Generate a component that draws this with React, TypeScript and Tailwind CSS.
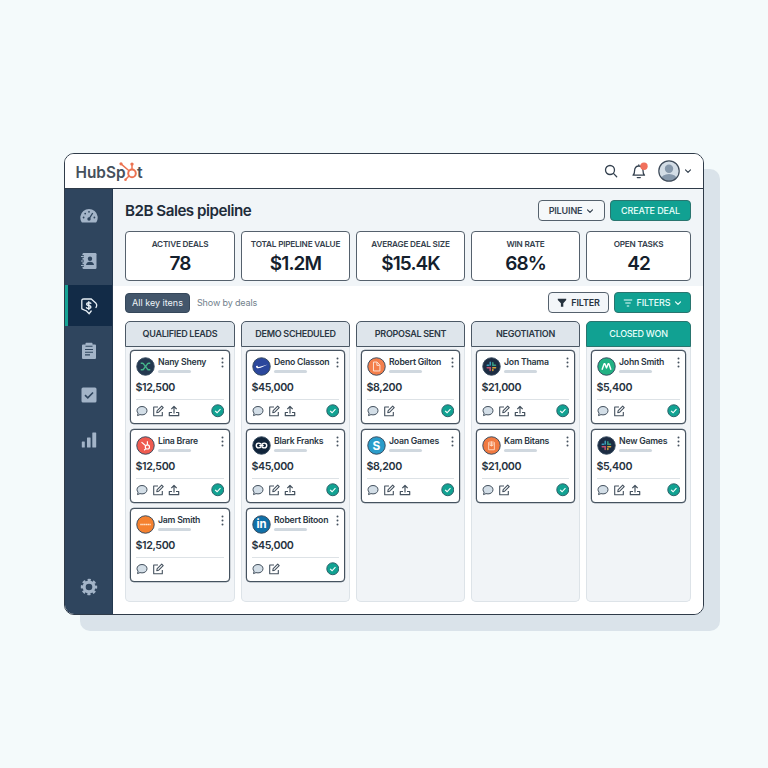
import {type ReactNode} from 'react';

type Deal = {name: string; amount: string; logo: string; upload?: boolean; done?: boolean};

const stats = [
  {label: 'ACTIVE DEALS', value: '78', width: 'w-[110px]'},
  {label: 'TOTAL PIPELINE VALUE', value: '$1.2M', width: 'w-[109px]'},
  {label: 'AVERAGE DEAL SIZE', value: '$15.4K', width: 'w-[109px]'},
  {label: 'WIN RATE', value: '68%', width: 'w-[109px]'},
  {label: 'OPEN TASKS', value: '42', width: 'w-[105px]'},
];

const columns: {title: string; width: string; won?: boolean; deals: Deal[]}[] = [
  {
    title: 'QUALIFIED LEADS',
    width: 'w-[110px]',
    deals: [
      {name: 'Nany Sheny', amount: '$12,500', logo: 'xing', upload: true, done: true},
      {name: 'Lina Brare', amount: '$12,500', logo: 'hub', upload: true, done: true},
      {name: 'Jam Smith', amount: '$12,500', logo: 'orange'},
    ],
  },
  {
    title: 'DEMO SCHEDULED',
    width: 'w-[109px]',
    deals: [
      {name: 'Deno Classon', amount: '$45,000', logo: 'swoosh', upload: true, done: true},
      {name: 'Blark Franks', amount: '$45,000', logo: 'loop', upload: true, done: true},
      {name: 'Robert Bitoon', amount: '$45,000', logo: 'in', done: true},
    ],
  },
  {
    title: 'PROPOSAL SENT',
    width: 'w-[109px]',
    deals: [
      {name: 'Robert Gilton', amount: '$8,200', logo: 'doc', done: true},
      {name: 'Joan Games', amount: '$8,200', logo: 's', upload: true, done: true},
    ],
  },
  {
    title: 'NEGOTIATION',
    width: 'w-[109px]',
    deals: [
      {name: 'Jon Thama', amount: '$21,000', logo: 'slack', upload: true, done: true},
      {name: 'Kam Bitans', amount: '$21,000', logo: 'book', done: true},
    ],
  },
  {
    title: 'CLOSED WON',
    width: 'w-[105px]',
    won: true,
    deals: [
      {name: 'John Smith', amount: '$5,400', logo: 'm', done: true},
      {name: 'New Games', amount: '$5,400', logo: 'slack', upload: true, done: true},
    ],
  },
];

const logoFill: Record<string, string> = {
  xing: '#24384f',
  hub: '#ef5b50',
  orange: '#f5812f',
  swoosh: '#2b479c',
  loop: '#10243a',
  in: '#1070a8',
  doc: '#f47f4b',
  s: '#2b9cc9',
  slack: '#1c2c42',
  book: '#f17a41',
  m: '#22b183',
};

const logoMark: Record<string, ReactNode> = {
  xing: (
    <g fill="none" stroke="#45b58a" strokeWidth="1.5">
      <path d="M5 6.500h1.800q1 0 1.700 1.500l3 4q.7 1.500 1.700 1.500H15" />
      <path d="M15 6.500h-1.800q-1 0-1.700 1.500l-3 4q-.7 1.500-1.700 1.500H5" />
    </g>
  ),
  hub: (
    <g fill="none" stroke="#fff" strokeWidth="1.2">
      <circle cx="12" cy="11.5" r="2.2" />
      <path d="M12 9.300V5.500M10.200 10.200 5.800 6.500M10.400 13.200 8.600 15" />
    </g>
  ),
  orange: <path d="M4.500 10h11" stroke="#ffe3cc" strokeWidth="1.5" strokeDasharray="1.6 .4" />,
  swoosh: <path d="M4.200 9.400c-.1 3 2.500 2.700 4.900 1.900L16.500 8l-7.300 2.100c-2 .6-3.400.5-3.200-1z" fill="#fff" />,
  loop: (
    <g fill="none" stroke="#fff" strokeWidth="1.5" strokeLinecap="round">
      <path d="M9.200 8.300Q8.300 7.500 7 7.500a2.500 2.500 0 0 0 0 5q1.500 0 2.500-1.200" />
      <path d="M10.500 8.700q1-1.200 2.500-1.200a2.500 2.500 0 0 1 0 5q-1.300 0-2.200-.8M8.300 10h3.400" />
    </g>
  ),
  in: (
    <text x="10" y="14.2" textAnchor="middle" fontSize="12" fontWeight="700" fill="#fff">
      in
    </text>
  ),
  doc: <path d="M6.800 5.300h3.800L13.600 8.500v6.200H6.800zM10.400 5.600v3.200h3" fill="none" stroke="#ffe6d8" strokeWidth="1" />,
  s: (
    <text x="10" y="14.4" textAnchor="middle" fontSize="12.5" fontWeight="700" fill="#fff">
      S
    </text>
  ),
  slack: (
    <g fill="none" strokeWidth="1.6" strokeLinecap="round">
      <path d="M8.700 5.500v3M5.500 8.700h1.600" stroke="#3a9dbd" />
      <path d="M11.400 6v2.600h2.800" stroke="#3b9f83" />
      <path d="M11.400 11.300h2.900M11.400 13.200v1" stroke="#d9a43a" />
      <path d="M5.500 11.300h3.100v2.900" stroke="#c2526f" />
    </g>
  ),
  book: (
    <g fill="none" stroke="#ffdfca" strokeWidth=".9">
      <path d="M7 6.500v8h6v-8M10 5.500v5.500M8.500 5.500v4.500h3V5.500" />
    </g>
  ),
  m: <path d="M5.300 13.500 7.500 7h.8l1.700 4.500L11.700 7h.8l2.200 6.500" fill="none" stroke="#fff" strokeWidth="1.5" strokeLinejoin="round" />,
};

const Chevron = ({className}: {className?: string}) => (
  <svg viewBox="0 0 8 8" className={`size-2 ${className ?? ''}`} fill="none" stroke="currentColor" strokeWidth="1.2" strokeLinecap="round" strokeLinejoin="round">
    <path d="m1.500 2.800 2.500 2.500 2.500-2.500" />
  </svg>
);

const Logo = () => (
  <svg viewBox="0 0 70 24" className="h-6 w-[70px]">
    <g fill="#45505c" fontSize="16" fontWeight="600" fontFamily="Inter, sans-serif">
      <text x="0.5" y="18.8" textLength="50" lengthAdjust="spacingAndGlyphs">
        HubSp
      </text>
      <text x="62" y="18.8">
        t
      </text>
    </g>
    <g fill="none" stroke="#ec7250" strokeWidth="2">
      <circle cx="57" cy="14.4" r="3.8" />
      <path d="M57 10.500V5.500M54 11.700 46.300 5.100M54 17l-3.500 3.500" strokeWidth="1.5" />
    </g>
    <g fill="#ec7250">
      <circle cx="57" cy="5.1" r="1.7" />
      <circle cx="46" cy="4.8" r="1.6" />
      <circle cx="50.5" cy="20.7" r="1.3" />
    </g>
  </svg>
);

const Header = () => (
  <header className="flex h-[35px] shrink-0 items-center border-b border-[#2f3b49] bg-white pr-[11px] pl-[10px]">
    <Logo />
    <div className="ml-auto flex items-center text-[#34414f]">
      <svg viewBox="0 0 14 14" className="size-3.5" fill="none" stroke="currentColor" strokeWidth="1.3" strokeLinecap="round">
        <circle cx="6" cy="6" r="4.5" />
        <path d="m9.400 9.400 3.300 3.300" />
      </svg>
      <svg viewBox="0 0 18 18" className="ml-3 size-[18px]" fill="none" stroke="currentColor" strokeWidth="1.3" strokeLinecap="round" strokeLinejoin="round">
        <path d="M3 13.200h11.500c-1.500-1.200-1.500-2.500-1.500-4.700 0-2.800-1.700-4.500-4.200-4.500S4.600 5.700 4.600 8.500c0 2.200-.1 3.500-1.600 4.700zM7.300 15.600h3M8.800 3.800V3" />
        <circle cx="14" cy="4.3" r="3.7" fill="#f1705c" stroke="none" />
      </svg>
      <svg viewBox="0 0 22 22" className="ml-[10px] size-[22px]">
        <clipPath id="user">
          <circle cx="11" cy="11" r="10" />
        </clipPath>
        <circle cx="11" cy="11" r="10" fill="#d3dde6" />
        <g clipPath="url(#user)" fill="#8698ab">
          <circle cx="11" cy="8.7" r="4.2" />
          <ellipse cx="11" cy="19.5" rx="8" ry="5.5" />
        </g>
        <circle cx="11" cy="11" r="10.2" fill="none" stroke="#3d4a59" strokeWidth="1.2" />
      </svg>
      <Chevron className="ml-1" />
    </div>
  </header>
);

const Sidebar = () => (
  <nav className="flex w-12 shrink-0 flex-col items-center border-r border-[#24384f] bg-[#2f455e] pb-[18px] text-[#a3b4c8]">
    <div className="flex h-[52px] w-full items-center justify-center pt-px">
      <svg viewBox="0 0 18 18" className="size-[18px]" fill="currentColor">
        <path d="M1.500 15A8.700 8.700 0 1 1 16.500 15q-.4.600-1.200.600H2.700q-.8 0-1.200-.6z" />
        <g fill="#2f455e">
          <circle cx="3.6" cy="10.5" r=".9" />
          <circle cx="5.2" cy="6.6" r=".9" />
          <circle cx="9" cy="4.8" r=".9" />
          <circle cx="14.4" cy="10.5" r=".9" />
          <circle cx="9" cy="12" r="1.7" />
        </g>
        <path d="m9 12 3.700-6" stroke="#2f455e" strokeWidth="1.3" />
      </svg>
    </div>
    <div className="flex h-[44px] w-full items-start justify-center pt-[11px]">
      <svg viewBox="0 0 18 18" className="size-[18px]" fill="currentColor">
        <rect x="2.5" y="1" width="14" height="16" rx="1.2" />
        <path d="M1 4.500h3M1 9h3M1 13.500h3" stroke="#2f455e" strokeWidth="2.4" />
        <path d="M1 4.500h2.800M1 9h2.800M1 13.500h2.800" stroke="currentColor" strokeWidth="1.2" />
        <circle cx="10" cy="6.8" r="2.2" fill="#2f455e" />
        <path d="M6 13c0-4.500 8-4.500 8 0z" fill="#2f455e" />
      </svg>
    </div>
    <div className="flex h-[41px] w-full items-center justify-center border-l-[3px] border-[#16a394] bg-[#122b47] pr-[3px] text-[#e8f0f6]">
      <svg viewBox="0 0 18 18" className="size-[18px]" fill="none" stroke="currentColor" strokeWidth="1.3" strokeLinecap="round" strokeLinejoin="round">
        <path d="M6.500 14 1.800 11.800V3.500q0-1.500 1.500-1.500L11 1.800l5 4.500c1 1.300.9 2.600 0 4.200M6.500 14l2.700 2.700 2-2.700" />
        <path d="M10.800 6.200c-1.200-1-4.200-.7-4.200 1 0 1.800 4.300.8 4.300 2.700 0 1.700-3 1.900-4.400.8M8.800 4.800v7.800" strokeWidth="1.4" />
      </svg>
    </div>
    <div className="flex h-[49px] w-full items-center justify-center">
      <svg viewBox="0 0 16 18" className="h-[18px] w-4" fill="currentColor">
        <path d="M2 2.500h2.500V1.500q0-.7.700-.7h5.600q.7 0 .7.700v1H14q1 0 1 1V16q0 1-1 1H2q-1 0-1-1V3.500q0-1 1-1z" />
        <path d="M4.500 4.300h7M4 7.500h8M4 10.200h8M4 12.900h5" stroke="#2f455e" strokeWidth="1.1" />
      </svg>
    </div>
    <div className="flex h-[40px] w-full items-center justify-center">
      <svg viewBox="0 0 16 16" className="size-4">
        <rect x=".5" y=".5" width="15" height="15" rx="1.5" fill="currentColor" />
        <path d="m4 8.200 2.800 2.700L12 5.500" fill="none" stroke="#2f455e" strokeWidth="1.6" />
      </svg>
    </div>
    <div className="flex h-[49px] w-full items-center justify-center">
      <svg viewBox="0 0 16 16" className="size-4" fill="currentColor">
        <rect x=".8" y="9.5" width="3" height="6" rx=".5" />
        <rect x="6" y="5.5" width="3.6" height="10" rx=".5" />
        <rect x="11.3" y=".5" width="3.9" height="15" rx=".5" />
      </svg>
    </div>
    <svg viewBox="0 0 18 18" className="mt-auto size-[18px]" fill="none" stroke="currentColor">
      <circle cx="9" cy="9" r="4.9" strokeWidth="3.2" />
      <circle cx="9" cy="9" r="7" strokeWidth="2.4" strokeDasharray="3.1 2.398" strokeDashoffset="1.55" />
    </svg>
  </nav>
);

const DealCard = ({deal}: {deal: Deal}) => (
  <article className="flex h-[74px] flex-col rounded-[4px] border border-[#45525f] bg-white px-[5px] shadow-[0_0_0_.2px_#45525f]">
    <div className="flex h-[27px] pt-[5.5px]">
      <svg viewBox="0 0 20 20" className="size-[19px] shrink-0 font-[Inter,sans-serif]">
        <circle cx="10" cy="10" r="9.2" fill={logoFill[deal.logo]} stroke="#35495d" strokeWidth="1" />
        {logoMark[deal.logo]}
      </svg>
      <div className="ml-[3.5px] flex flex-col">
        <span className="text-[8.7px] leading-[11px] font-semibold tracking-[-0.22px] whitespace-nowrap text-[#2b3743]">{deal.name}</span>
        <span className="mt-0.5 h-[3.5px] w-[33px] rounded-full bg-[#d0d8df]" />
      </div>
      <svg viewBox="0 0 3 11" className="mr-[.5px] ml-auto h-[11px] w-[3px] shrink-0" fill="#45525f">
        <circle cx="1.5" cy="1.5" r="1" />
        <circle cx="1.5" cy="5.5" r="1" />
        <circle cx="1.5" cy="9.5" r="1" />
      </svg>
    </div>
    <div className="mt-[3px] h-[18px] text-[10.7px] leading-[13px] font-semibold tracking-[-0.4px] text-[#26323e]">{deal.amount}</div>
    <div className="flex flex-1 items-center gap-1 border-t border-[#dde2e6] pb-px text-[#44515e]">
      <svg viewBox="0 0 12 12" className="size-3" fill="#d3dee7" stroke="currentColor">
        <path d="M6 1.500c2.900 0 5 1.800 5 4.200s-2.100 4.200-5 4.200c-.7 0-1.400-.1-2-.3l-2.500 1 .6-2.500C1.400 7.500 1 6.600 1 5.700c0-2.400 2.100-4.200 5-4.200z" />
      </svg>
      <svg viewBox="0 0 12 12" className="ml-[.5px] size-3" fill="none" stroke="currentColor" strokeWidth="1.1" strokeLinejoin="round">
        <path d="M6 2H1.700v8.800h8.600V7" />
        <path d="m4.800 7.700.4-2 4.500-4.500 1.500 1.500-4.500 4.500z" />
      </svg>
      {deal.upload && (
        <svg viewBox="0 0 12 12" className="size-3" fill="none" stroke="currentColor" strokeWidth="1.2" strokeLinejoin="round">
          <path d="M6 8.500V1.600M3.300 4.200 6 1.500l2.700 2.700M4 7.500H1.300v3.200h9.400V7.500H8" />
        </svg>
      )}
      {deal.done && (
        <svg viewBox="0 0 14 14" className="ml-auto size-[13.5px]" fill="none">
          <circle cx="7" cy="7" r="6.2" fill="#11a292" stroke="#2c6068" />
          <path d="m4.300 7.200 2 1.900 3.500-3.800" stroke="#fff" strokeWidth="1.2" />
        </svg>
      )}
    </div>
  </article>
);

const button = 'flex h-[21px] items-center justify-center rounded-[4px] border text-[9px] tracking-[-0.15px]';

const App = () => {
  return (
    <main className="h-[768px] w-[768px] bg-[#f4fafb] pt-[153px] pl-16 font-[Inter,sans-serif]">
      <div className="flex h-[462px] w-[640px] flex-col overflow-hidden rounded-[10px] border-[1.5px] border-[#2f3b49] bg-white shadow-[16px_16px_0_#dae3ea]">
        <Header />
        <div className="flex min-h-0 flex-1">
          <Sidebar />
          <div className="flex flex-1 flex-col bg-white">
            <section className="h-[97px] bg-[#f1f5f8] px-3 pt-[11px]">
              <div className="flex h-[21px] items-center">
                <h1 className="pt-0.5 text-[15.2px] font-semibold tracking-[-0.5px] whitespace-nowrap text-[#1f2c3a]">B2B Sales pipeline</h1>
                <button className={`${button} ml-auto w-[67px] gap-1 border-[#55616d] bg-[#f5f8fa] font-semibold text-[#34414f]`}>
                  PILUINE <Chevron />
                </button>
                <button className={`${button} ml-[5px] w-[81px] border-[#29756f] bg-[#11a192] font-medium text-[#e9fffb]`}>CREATE DEAL</button>
              </div>
              <div className="mt-[10px] flex justify-between">
                {stats.map(stat => (
                  <div className={`flex h-[50px] flex-col items-center rounded-[4px] border border-[#55616d] bg-white pt-[7px] ${stat.width}`} key={stat.label}>
                    <span className="text-[8.2px] leading-[11px] font-semibold tracking-[-0.2px] whitespace-nowrap text-[#34404c]">{stat.label}</span>
                    <span className="text-[19px] leading-[27px] font-semibold tracking-[-0.9px] text-[#14202c]">{stat.value}</span>
                  </div>
                ))}
              </div>
            </section>
            <section className="flex flex-1 flex-col px-3 pt-[6px]">
              <div className="flex h-[21px] items-center">
                <button className="h-[20px] w-[65px] rounded-[4px] border border-[#35475a] bg-[#43566b] text-[9px] text-[#eef4f8]">All key itens</button>
                <span className="ml-[7px] text-[9px] tracking-[-0.15px] text-[#727f8c]">Show by deals</span>
                <button className={`${button} ml-auto w-[61px] gap-1 border-[#55616d] bg-[#f3f6f9] font-semibold text-[#26323e]`}>
                  <svg viewBox="0 0 10 10" className="size-[10px]" fill="currentColor">
                    <path d="M.8.800h8.400v1.200L6.300 5.300v3.500H3.900V5.300L.8 2z" />
                  </svg>
                  FILTER
                </button>
                <button className={`${button} ml-[5px] w-[77px] gap-1 border-[#29756f] bg-[#11a192] font-medium text-[#e9fffb]`}>
                  <svg viewBox="0 0 10 10" className="size-[10px]" stroke="currentColor" strokeWidth="1.1">
                    <path d="M.8 2h8.400M2.300 5h5.400M3.800 8h2.400" />
                  </svg>
                  FILTERS <Chevron />
                </button>
              </div>
              <div className="mt-2 flex justify-between">
                {columns.map(column => (
                  <div className={`flex h-[281px] flex-col rounded-[5px] bg-[#f1f4f7] ${column.width}`} key={column.title}>
                    <h2
                      className={`flex h-[26px] items-center justify-center rounded-t-[5px] border text-[9px] tracking-[-0.28px] whitespace-nowrap ${
                        column.won ? 'border-[#29756f] bg-[#11a192] font-medium text-[#e9fffb]' : 'border-[#4b5865] bg-[#dee5eb] font-semibold text-[#2b3743]'
                      }`}
                    >
                      {column.title}
                    </h2>
                    <div className="flex flex-1 flex-col gap-[5px] rounded-b-[5px] border border-t-0 border-[#dde3e8] pt-[3px] pr-1 pl-[3.5px]">
                      {column.deals.map(deal => (
                        <DealCard deal={deal} key={deal.name} />
                      ))}
                    </div>
                  </div>
                ))}
              </div>
            </section>
          </div>
        </div>
      </div>
    </main>
  );
};

export default App;
